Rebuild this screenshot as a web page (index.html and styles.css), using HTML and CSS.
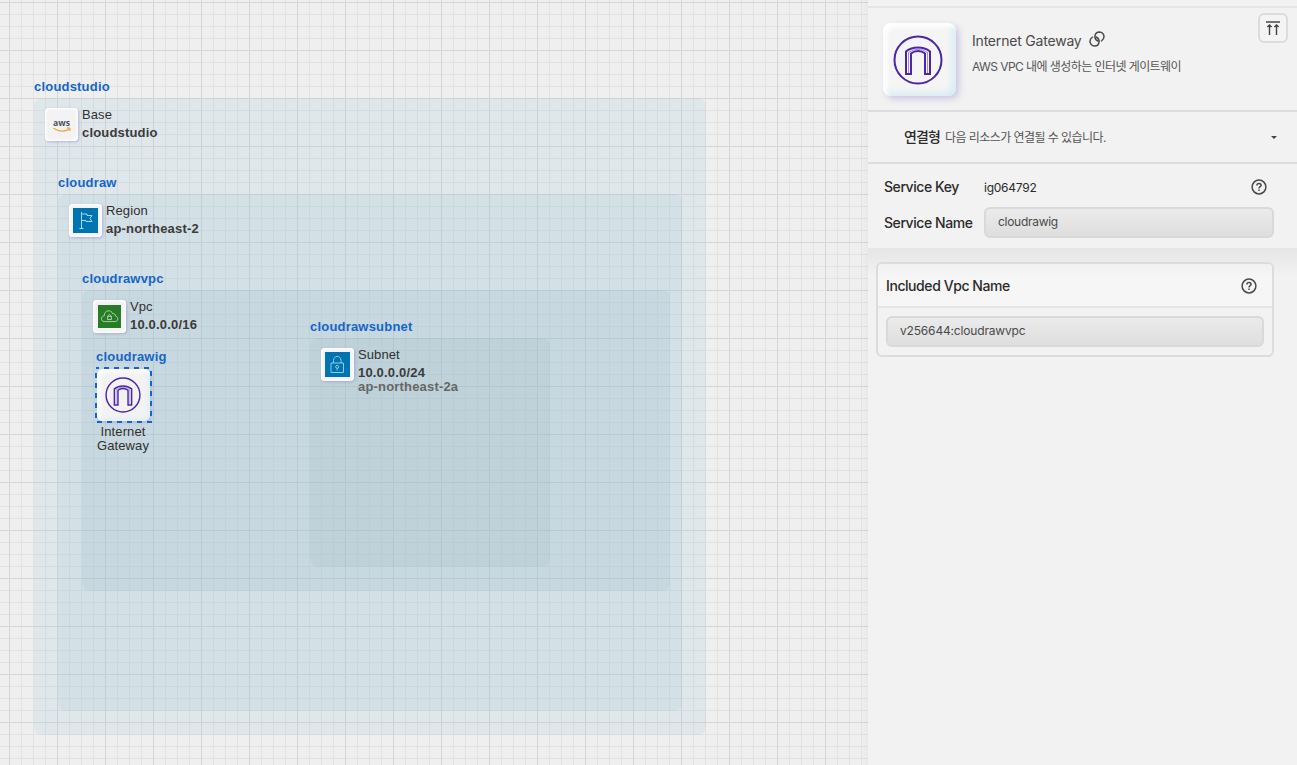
FILE: index.html
```html
<!DOCTYPE html>
<html lang="ko">
<head>
<meta charset="utf-8">
<title>Cloud diagram</title>
<link rel="stylesheet" href="styles.css">
</head>
<body>
<svg class="defs" aria-hidden="true">
  <symbol id="gateway" viewBox="0 0 50 50">
    <g fill="none" stroke="#4d27aa" stroke-width="2">
      <circle cx="25" cy="25" r="23.5"/>
      <path d="M13 39V16.5Q18 12.5 25 12.5T37 16.5V39H32V18.5Q29 16 25 16T18 18.5V39Z"/>
      <path d="M15.5 38V17.5Q20 14.3 25 14.3T34.5 17.5V38" stroke-width="1" opacity=".5"/>
    </g>
  </symbol>
  <symbol id="help" viewBox="0 0 16 16">
    <circle cx="8" cy="8" r="6.9" fill="none" stroke="#4a4a4a" stroke-width="1.5"/>
    <path d="M5.9 6.5Q5.9 4.5 8 4.5T10.1 6.3C10.1 7.7 8 7.7 8 9.5M8 10.6V12" fill="none" stroke="#4a4a4a" stroke-width="1.5"/>
  </symbol>
</svg>
<main class="app">
  <section class="canvas">
    <div class="zone base"></div>
    <div class="zone region"></div>
    <div class="zone vpc"></div>
    <div class="zone subnet"></div>

    <div class="node at-base">
      <div class="tag">cloudstudio</div>
      <div class="row">
        <div class="tile"><svg width="20" height="18" viewBox="0 -2 20 18"><text class="aws" x="1" y="7.6" textLength="17" lengthAdjust="spacingAndGlyphs">aws</text><path d="M1.5 10.2Q9.5 15.5 17 11.3M15 10.2Q19.6 9 17.4 13" fill="none" stroke="#f7a135" stroke-width="1.2"/></svg></div>
        <div class="words"><span>Base</span><b>cloudstudio</b></div>
      </div>
    </div>
    <div class="node at-region">
      <div class="tag">cloudraw</div>
      <div class="row">
        <div class="tile"><svg width="25" height="25" viewBox="0 0 25 25"><rect width="25" height="25" fill="#0073b1"/><path d="M8.5 4V20.5M6.5 20.5H10.5M8.5 6H14V7.5H19L17 10.5L19 13.5H13V12.5H8.5" fill="none" stroke="#a9d7ee" stroke-width="1"/></svg></div>
        <div class="words"><span>Region</span><b>ap-northeast-2</b></div>
      </div>
    </div>
    <div class="node at-vpc">
      <div class="tag">cloudrawvpc</div>
      <div class="row">
        <div class="tile"><svg width="23" height="23" viewBox="0 0 24 24"><rect width="24" height="24" fill="#277c28"/><path d="M7 17.3C2.5 17.3 2.5 11.5 6.5 11.3C6.5 5 14 4.5 15.3 9.2C17 8.5 18.3 9.8 18.2 11.6C21.8 12.3 21.2 17.3 18 17.3Z" fill="none" stroke="#a9d5a5" stroke-width="1"/><path d="M10 11.8H14V15.2H10ZM10.8 11.8V10.8Q12 9 13.2 10.8V11.8" fill="none" stroke="#c4e2c0" stroke-width=".9"/></svg></div>
        <div class="words"><span>Vpc</span><b>10.0.0.0/16</b></div>
      </div>
    </div>
    <div class="node at-subnet">
      <div class="tag">cloudrawsubnet</div>
      <div class="row">
        <div class="tile"><svg width="25" height="25" viewBox="0 0 25 25"><rect width="25" height="25" fill="#0073b1"/><g fill="none" stroke="#8fcbe8" stroke-width="1"><path d="M6 11H18.5V20.5H6ZM8.5 11V8.5C8.5 3 16 3 16 8.5V11"/><circle cx="12.2" cy="14.8" r="1.5"/><path d="M12.2 16.3V18.5"/></g></svg></div>
        <div class="words"><span>Subnet</span><b>10.0.0.0/24</b><b class="zone-name">ap-northeast-2a</b></div>
      </div>
    </div>
    <div class="node at-gateway">
      <div class="tag">cloudrawig</div>
      <div class="selected">
        <div class="tile medium"><svg width="36" height="36"><use href="#gateway"/></svg></div>
        <svg class="dashes" width="57" height="56" viewBox="0 0 57 56"><rect x="1" y="1" width="55" height="54" fill="none" stroke="#1266d0" stroke-width="2" stroke-dasharray="5 5" stroke-dashoffset="2"/></svg>
      </div>
      <div class="caption">Internet<br>Gateway</div>
    </div>
  </section>

  <aside class="panel">
    <header class="summary">
      <div class="tile large"><svg width="50" height="50"><use href="#gateway"/></svg></div>
      <div class="about">
        <div class="title"><span>Internet Gateway</span><svg width="16" height="16" viewBox="0 0 16 16"><g fill="none" stroke="#4a4a4a" stroke-width="1.5" stroke-linecap="round"><path d="M8.8 10C6.8 9 5.8 7.2 5.9 5.2C6.2 2.7 8.2 1 10.5 1C13.2 1.1 15.1 3.2 15 5.8C14.9 7.6 14 9 12.5 9.8"/><path d="M7.2 6C9.2 7 10.2 8.8 10.1 10.8C9.8 13.3 7.8 15 5.5 15C2.8 14.9 .9 12.8 1 10.2C1.1 8.4 2 7 3.5 6.2"/></g></svg></div>
        <p>AWS VPC 내에 생성하는 인터넷 게이트웨이</p>
      </div>
      <button class="to-top"><svg width="16" height="16" viewBox="0 0 16 16"><path d="M1 2H15" stroke="#666" stroke-width="1.8"/><path d="M4.5 15V5M2.4 7L4.5 4.9L6.6 7M11.5 15V5M9.4 7L11.5 4.9L13.6 7" fill="none" stroke="#444" stroke-width="1.4"/></svg></button>
    </header>
    <section class="links"><strong>연결형</strong><span>다음 리소스가 연결될 수 있습니다.</span><i class="caret"></i></section>
    <section class="service">
      <div class="line key"><label>Service Key</label><span>ig064792</span><svg width="16" height="16"><use href="#help"/></svg></div>
      <div class="line"><label>Service Name</label><div class="field">cloudrawig</div></div>
    </section>
    <section class="details">
      <div class="card">
        <div class="card-head"><span>Included Vpc Name</span><svg width="16" height="16"><use href="#help"/></svg></div>
        <div class="card-body"><div class="field vpc-field">v256644:cloudrawvpc</div></div>
      </div>
    </section>
  </aside>
</main>
</body>
</html>
```
FILE: styles.css
```css
* { box-sizing: border-box; }
body { margin: 0; overflow: hidden; }
svg { display: block; flex: none; }
.defs { position: absolute; width: 0; height: 0; }
.app { display: flex; width: 1297px; height: 765px; }

.canvas {
  position: relative;
  flex: none;
  width: 868px;
  background:
    linear-gradient(90deg, transparent 862px, rgba(0, 0, 0, .03)),
    linear-gradient(#d6d6d6 1px, transparent 1px) 0 2px / 48px 48px,
    linear-gradient(90deg, #d6d6d6 1px, transparent 1px) 9px 0 / 48px 48px,
    linear-gradient(#e2e2e2 1px, transparent 1px) 0 2px / 12px 12px,
    linear-gradient(90deg, #e2e2e2 1px, transparent 1px) 9px 0 / 12px 12px,
    #efefef;
  font: 13px/14px "Liberation Sans", Arial, sans-serif;
  color: #303030;
}
.zone { position: absolute; border-radius: 8px; }
.base { left: 34px; top: 98px; width: 672px; height: 637px; background: rgba(165, 198, 213, .2); }
.region { left: 58px; top: 194px; width: 624px; height: 517px; background: rgba(150, 188, 205, .17); }
.vpc { left: 82px; top: 290px; width: 588px; height: 301px; background: rgba(150, 175, 200, .17); }
.subnet { left: 310px; top: 338px; width: 240px; height: 229px; background: rgba(150, 185, 195, .18); }

.node { position: absolute; }
.at-base { left: 34px; top: 80px; }
.at-region { left: 58px; top: 176px; }
.at-vpc { left: 82px; top: 272px; }
.at-subnet { left: 310px; top: 320px; }
.at-gateway { left: 95px; top: 350px; width: 57px; }
.tag { color: #1465cc; font-weight: bold; white-space: nowrap; letter-spacing: .2px; }
.row { display: flex; gap: 4px; padding: 14px 0 0 11px; }
.words { display: flex; flex-direction: column; white-space: nowrap; letter-spacing: .1px; }
.words b { margin-top: 4px; color: #3b3b3b; letter-spacing: .18px; }
.words .zone-name { margin-top: 0; color: #666; }
.tile {
  display: flex;
  align-items: center;
  justify-content: center;
  flex: none;
  width: 33px;
  height: 33px;
  border-radius: 4px;
  background: #f3f3f4;
  box-shadow: 1px 1px 3px rgba(145, 145, 205, .6), inset 1px 1px 3px #fff, inset -1px -1px 3px #fff;
}
.aws { font: bold 9.5px/1 "Open Sans", sans-serif; letter-spacing: 0; fill: #4a525e; }
.medium { width: 53px; height: 52px; padding-right: 2px; border-radius: 6px; box-shadow: 1px 1px 3px rgba(145, 145, 205, .5), inset 3px 3px 4px #fff, inset -3px -3px 4px #e2f0f5; }
.selected { position: relative; width: 57px; height: 56px; margin-top: 3px; padding: 2px; }
.dashes { position: absolute; left: 0; top: 0; }
.at-gateway .tag { padding-left: 1px; }
.caption { margin: 2px 1px 0 0; text-align: center; letter-spacing: .1px; }

.panel {
  flex: 1;
  background: #f2f2f2;
  padding-top: 6px;
  font-family: Inter, "Noto Sans CJK KR", sans-serif;
  color: #2b2b2b;
}
.summary {
  display: flex;
  height: 106px;
  padding: 15px 9px 0 15px;
  border-top: 2px solid #e6e6e6;
  border-bottom: 2px solid #dcdcdc;
}
.large { width: 73px; height: 73px; padding-right: 3px; border-radius: 8px; background: #f5f5f5; box-shadow: 3px 3px 6px rgba(130, 120, 200, .35), inset 4px 4px 5px #fff, inset -4px -4px 6px #d8edf3; }
.about { flex: 1; padding: 9px 0 0 16px; }
.title { display: flex; gap: 7px; font-size: 14px; line-height: 18px; letter-spacing: -.2px; color: #4a4a4a; }
.title svg { margin-top: -1px; }
.about p { margin: 8px 0 0; font-size: 12px; line-height: 18px; letter-spacing: -.57px; color: #555; }
.to-top { display: grid; place-items: center; width: 30px; height: 30px; margin-top: -10px; padding: 0; border: 2px solid #dcdcdc; border-radius: 6px; background: #f4f4f4; }
.links { display: flex; align-items: center; height: 52px; padding: 0 20px 2px 36px; border-bottom: 2px solid #dcdcdc; }
.links strong { font-size: 14px; font-weight: 500; letter-spacing: -.9px; }
.links span { flex: 1; margin-left: 5px; font-size: 12px; letter-spacing: -.56px; color: #555; }
.caret { margin-top: 2px; border: 3px solid transparent; border-top: 3px solid #444; border-bottom: 0; }
.service { height: 84px; padding: 8px 23px 0 16px; }
.line { display: flex; align-items: center; height: 31px; }
.line.key { height: 30px; margin-bottom: 5px; padding-right: 7px; }
.line label { width: 100px; padding-bottom: 1px; font-size: 14px; font-weight: 500; white-space: nowrap; letter-spacing: -.43px; }
.line span { flex: 1; font-size: 12px; letter-spacing: -.25px; }
.field { flex: 1; height: 31px; padding: 0 12px; border: 2px solid #d9d9d9; border-radius: 6px; background: linear-gradient(#ebebeb, #dedede); font-size: 12px; line-height: 26px; letter-spacing: -.28px; color: #4a4a4a; }
.vpc-field { letter-spacing: -.17px; }
.details { height: 517px; padding: 14px 23px 0 8px; background: linear-gradient(#e5e5e5, #f2f2f2 28px); }
.card { height: 95px; border: 2px solid #dcdcdc; border-radius: 6px; background: #f2f2f2; }
.card-head { display: flex; align-items: center; justify-content: space-between; height: 44px; padding: 1px 15px 0 8px; border-bottom: 2px solid #e6e6e6; background: linear-gradient(#f1f1f1, #f6f6f6 15px); border-radius: 4px 4px 0 0; font-size: 14px; font-weight: 500; letter-spacing: -.43px; }
.card-body { display: flex; padding: 8px; }
```
